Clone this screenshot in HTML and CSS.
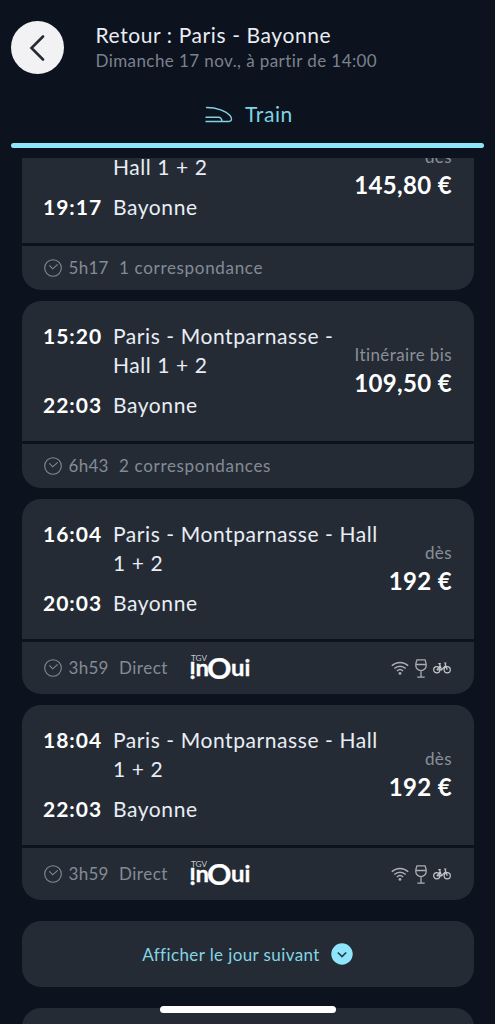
FILE: index.html
```html
<!DOCTYPE html>
<html lang="fr">
<head>
    <meta charset="UTF-8">
    <meta name="viewport" content="width=device-width, initial-scale=1.0">
    <title>Retour : Paris - Bayonne</title>
    <link rel="stylesheet" href="styles.css">
</head>
<body>
    <!-- Icônes partagées -->
    <svg class="sprite" width="0" height="0">
        <symbol id="clock" viewBox="0 0 18 18">
            <circle cx="9" cy="9" r="8.3"/>
            <path d="M5.4 6.4l3.300 3.400 5-4.400"/>
        </symbol>
        <symbol id="wifi" viewBox="0 0 18 14">
            <path d="M.8 4.8a11.8 11.8 0 0 1 16.4 0M3.3 7.5a8.2 8.2 0 0 1 11.4 0M5.9 10a4.6 4.6 0 0 1 6.2 0"/>
            <circle class="dot" cx="9" cy="12.4" r="1.4"/>
        </symbol>
        <symbol id="glass" viewBox="0 0 12 19">
            <path d="M2 .8h8c.8 2 1.2 4 1.2 5.6a5.2 5.2 0 0 1-10.400 0C.8 4.800 1.200 2.800 2 .8zM1.200 5.500h9.600M6 11.600v6.400M2.300 18.200h7.400"/>
        </symbol>
        <symbol id="bike" viewBox="0 0 18 12">
            <circle cx="3.800" cy="7.800" r="3.100"/>
            <circle cx="14.200" cy="7.800" r="3.100"/>
            <path d="M3.800 7.800h4.700L6.500 1.800M5.300 1.700h2.500M8.500 7.800l3.700-3.800M14.200 7.800L11.900 1h1.500M3.800 7.800l3.300-3.800"/>
        </symbol>
    </svg>

    <header>
        <div class="top">
            <button class="back" aria-label="Retour">
                <svg width="16" height="26" viewBox="0 0 16 26"><path d="M14 1.500L2.500 13 14 24.500"/></svg>
            </button>
            <div>
                <h1>Retour : Paris - Bayonne</h1>
                <p class="date">Dimanche 17 nov., à partir de 14:00</p>
            </div>
        </div>
        <div class="tab">
            <svg width="28" height="18" viewBox="0 0 28 18"><path d="M1.500 1.500C12 1.500 21 5 25 9.500c2.500 3 2 6-1.500 6H1M1 11.300h12.500c2 0 3.200 1.500 3.500 4"/></svg>
            <span>Train</span>
        </div>
    </header>

    <main>
        <article class="card">
            <div class="trip">
                <dl>
                    <dt>14:00</dt>
                    <dd>Paris - Montparnasse -<br>Hall 1 + 2</dd>
                    <dt>19:17</dt>
                    <dd>Bayonne</dd>
                </dl>
                <div class="price"><span>dès</span><strong>145,80 €</strong></div>
            </div>
            <div class="details">
                <svg class="clock"><use href="#clock"/></svg>
                <span class="duration">5h17</span>
                <span>1 correspondance</span>
            </div>
        </article>

        <article class="card">
            <div class="trip">
                <dl>
                    <dt>15:20</dt>
                    <dd>Paris - Montparnasse -<br>Hall 1 + 2</dd>
                    <dt>22:03</dt>
                    <dd>Bayonne</dd>
                </dl>
                <div class="price"><span>Itinéraire bis</span><strong>109,50 €</strong></div>
            </div>
            <div class="details">
                <svg class="clock"><use href="#clock"/></svg>
                <span class="duration">6h43</span>
                <span>2 correspondances</span>
            </div>
        </article>

        <article class="card">
            <div class="trip">
                <dl>
                    <dt>16:04</dt>
                    <dd>Paris - Montparnasse - Hall<br>1 + 2</dd>
                    <dt>20:03</dt>
                    <dd>Bayonne</dd>
                </dl>
                <div class="price"><span>dès</span><strong>192 €</strong></div>
            </div>
            <div class="details tall">
                <svg class="clock"><use href="#clock"/></svg>
                <span class="duration">3h59</span>
                <span>Direct</span>
                <svg class="inoui" width="64" height="30" viewBox="0 0 64 30">
                    <text class="tgv" x="2" y="7.500" textLength="16" lengthAdjust="spacingAndGlyphs">TGV</text>
                    <text class="word" transform="rotate(180 3.500 16)" x="0.500" y="23.500">i</text>
                    <text class="word" x="6.500" y="22.500" textLength="13.500" lengthAdjust="spacingAndGlyphs">n</text>
                    <text class="big" x="18" y="26" textLength="24.500" lengthAdjust="spacingAndGlyphs">O</text>
                    <text class="word" x="42" y="22.500" textLength="13.500" lengthAdjust="spacingAndGlyphs">u</text>
                    <text class="word" x="55.500" y="22.500">i</text>
                </svg>
                <div class="services">
                    <svg class="wifi"><use href="#wifi"/></svg>
                    <svg class="glass"><use href="#glass"/></svg>
                    <svg class="bike"><use href="#bike"/></svg>
                </div>
            </div>
        </article>

        <article class="card">
            <div class="trip">
                <dl>
                    <dt>18:04</dt>
                    <dd>Paris - Montparnasse - Hall<br>1 + 2</dd>
                    <dt>22:03</dt>
                    <dd>Bayonne</dd>
                </dl>
                <div class="price"><span>dès</span><strong>192 €</strong></div>
            </div>
            <div class="details tall">
                <svg class="clock"><use href="#clock"/></svg>
                <span class="duration">3h59</span>
                <span>Direct</span>
                <svg class="inoui" width="64" height="30" viewBox="0 0 64 30">
                    <text class="tgv" x="2" y="7.500" textLength="16" lengthAdjust="spacingAndGlyphs">TGV</text>
                    <text class="word" transform="rotate(180 3.500 16)" x="0.500" y="23.500">i</text>
                    <text class="word" x="6.500" y="22.500" textLength="13.500" lengthAdjust="spacingAndGlyphs">n</text>
                    <text class="big" x="18" y="26" textLength="24.500" lengthAdjust="spacingAndGlyphs">O</text>
                    <text class="word" x="42" y="22.500" textLength="13.500" lengthAdjust="spacingAndGlyphs">u</text>
                    <text class="word" x="55.500" y="22.500">i</text>
                </svg>
                <div class="services">
                    <svg class="wifi"><use href="#wifi"/></svg>
                    <svg class="glass"><use href="#glass"/></svg>
                    <svg class="bike"><use href="#bike"/></svg>
                </div>
            </div>
        </article>

        <button class="next-day">
            <span>Afficher le jour suivant</span>
            <svg width="22" height="22" viewBox="0 0 22 22"><circle cx="11" cy="11" r="10.700"/><path d="M6.800 9.500l4.200 4 4.200-4"/></svg>
        </button>

        <div class="card placeholder"></div>
    </main>

    <div class="home-bar"></div>
</body>
</html>
```
FILE: styles.css
```css
* {
    box-sizing: border-box;
}

body {
    margin: 0;
    height: 100vh;
    display: flex;
    flex-direction: column;
    overflow: hidden;
    background-color: #0c121e;
    color: #e9edf4;
    font-family: Lato, 'Open Sans', sans-serif;
}

button {
    border: none;
    padding: 0;
    font: inherit;
}

svg {
    fill: none;
    stroke: currentColor;
    flex-shrink: 0;
}

.sprite {
    position: absolute;
}

header {
    flex: none;
    height: 158px;
    padding: 21px 11px 0;
}

.top {
    display: flex;
    gap: 31.5px;
}

.back {
    width: 53px;
    height: 53px;
    border-radius: 50%;
    background-color: #f2f2f5;
    color: #252b36;
    display: flex;
    align-items: center;
    justify-content: center;
}

.back svg {
    stroke-width: 2.6;
    stroke-linecap: round;
    margin-right: 1px;
}

h1 {
    margin: 0;
    font-size: 21px;
    font-weight: 400;
    line-height: 28px;
    letter-spacing: 0.6px;
}

.date {
    margin: 0;
    font-size: 17px;
    line-height: 24px;
    letter-spacing: 0.42px;
    color: #7c828d;
}

.tab {
    height: 53px;
    margin-top: 21px;
    padding: 0 0 16px 3px;
    display: flex;
    align-items: center;
    justify-content: center;
    gap: 12px;
    font-size: 21px;
    letter-spacing: 0.6px;
    color: #7fd3e2;
    position: relative;
}

.tab svg {
    stroke-width: 1.4;
    stroke-linecap: round;
    margin-top: 2px;
}

.tab::after {
    content: "";
    position: absolute;
    left: 0;
    right: 0;
    bottom: 0;
    height: 5px;
    border-radius: 3px;
    background-color: #8fe5f8;
}

/* Liste des trajets */
main {
    flex: 1;
    min-height: 0;
    overflow: hidden;
    padding: 0 21.5px;
}

.card {
    margin: 0 0 11px;
    border-radius: 19px;
    overflow: hidden;
}

/* La première carte est déjà défilée sous l'en-tête */
.card:first-child {
    margin-top: -55px;
}

.trip {
    height: 140px;
    padding: 20px 21.5px;
    display: flex;
    justify-content: space-between;
    background-color: #242b35;
}

dl {
    margin: 0;
    display: grid;
    grid-template-columns: 70px auto;
    align-content: start;
    row-gap: 11px;
    font-size: 21px;
    line-height: 29px;
    letter-spacing: 0.58px;
    white-space: nowrap;
}

dt {
    font-weight: 700;
    letter-spacing: 1px;
    color: #fff;
}

dd {
    margin: 0;
}

.price {
    display: flex;
    flex-direction: column;
    align-items: flex-end;
    padding-top: 20px;
    white-space: nowrap;
}

.price span {
    font-size: 17px;
    line-height: 28px;
    letter-spacing: 0.4px;
    color: #8a8f98;
}

.price strong {
    font-size: 24px;
    line-height: 28px;
    letter-spacing: 0.35px;
    color: #fff;
}

.details {
    height: 44px;
    margin-top: 3px;
    padding: 0 22px 2px;
    display: flex;
    align-items: center;
    background-color: #242b35;
    color: #858b95;
    font-size: 17px;
    letter-spacing: 0.68px;
}

.details.tall {
    height: 52px;
    letter-spacing: 0.5px;
}

.clock {
    width: 18px;
    height: 18px;
    stroke-width: 1.1;
    margin-top: 2px;
}

.duration {
    width: 50.5px;
    margin-left: 7px;
    letter-spacing: 0.3px;
}

.inoui {
    margin: 2px 0 0 21px;
    fill: #fff;
    stroke: none;
    letter-spacing: 0;
}

.inoui .tgv {
    font-size: 8px;
    fill: #c8cbd0;
}

.inoui .word {
    font-size: 23px;
    font-weight: 700;
    stroke: #fff;
    stroke-width: 0.3;
}

.inoui .big {
    font-size: 29px;
    font-weight: 700;
    stroke: #fff;
    stroke-width: 0.2;
}

.services {
    margin: 2px 1px 0 auto;
    display: flex;
    align-items: center;
    gap: 6px;
    color: #a9adb4;
}

.wifi {
    width: 18px;
    height: 14px;
    stroke-width: 1.5;
}

.dot {
    fill: currentColor;
    stroke: none;
}

.glass {
    width: 12px;
    height: 19px;
    stroke-width: 1.3;
}

.bike {
    width: 18px;
    height: 12px;
    stroke-width: 1.2;
    color: #c3c6cb;
}

.next-day {
    width: 100%;
    height: 66px;
    margin: 21px 0;
    border-radius: 19px;
    display: flex;
    align-items: center;
    justify-content: center;
    gap: 11px;
    background-color: #242b35;
    color: #84d5e4;
    font-size: 17px;
    letter-spacing: 0.4px;
}

.next-day circle {
    fill: #8fe5fb;
    stroke: none;
}

.next-day path {
    stroke: #24404e;
    stroke-width: 1.7;
}

.placeholder {
    height: 187px;
    background-color: #242b35;
}

.home-bar {
    position: fixed;
    left: 160px;
    bottom: 11px;
    width: 176px;
    height: 7px;
    border-radius: 4px;
    background-color: #fff;
}
```
